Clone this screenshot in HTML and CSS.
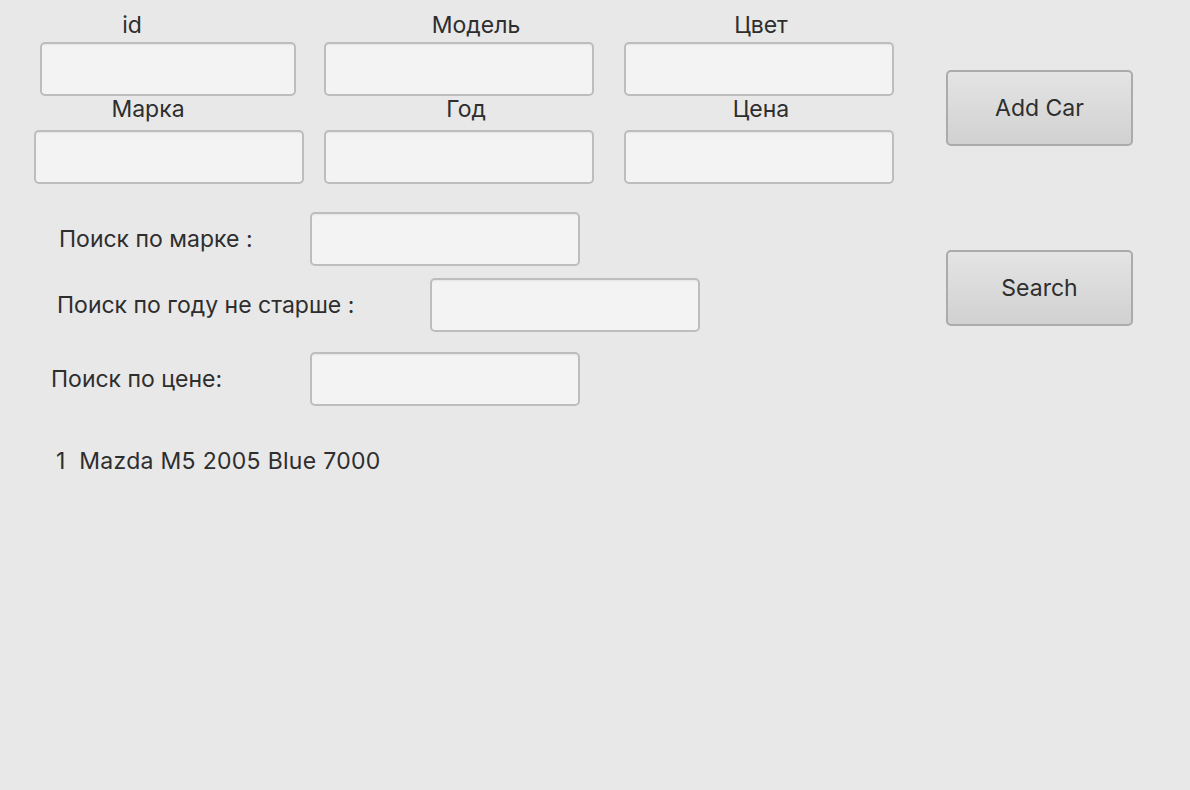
FILE: index.html
```html
<!DOCTYPE html>
<html lang="ru">
<head>
<meta charset="utf-8">
<title>Cars</title>
<link rel="stylesheet" href="styles.css">
</head>
<body>
<main class="page">
  <section class="form">
    <div class="lblrow r1">
      <div class="cell w256 ml40"><span class="lbl lbl-id">id</span></div>
      <div class="cell w270 ml28"><span class="lbl lbl-model">Модель</span></div>
      <div class="cell w270 ml30"><span class="lbl lbl-color">Цвет</span></div>
    </div>
    <div class="fieldrow">
      <input class="field w256 ml40" type="text">
      <input class="field w270 ml28" type="text">
      <input class="field w270 ml30" type="text">
    </div>
    <div class="lblrow r2">
      <div class="cell w270 ml34"><span class="lbl lbl-brand">Марка</span></div>
      <div class="cell w270 ml20"><span class="lbl lbl-year">Год</span></div>
      <div class="cell w270 ml30"><span class="lbl lbl-price">Цена</span></div>
    </div>
    <div class="fieldrow">
      <input class="field w270 ml34" type="text">
      <input class="field w270 ml20" type="text">
      <input class="field w270 ml30" type="text">
    </div>

    <div class="search s1">
      <span class="slabel sl1">Поиск по марке :</span>
      <input class="field w270" type="text">
    </div>
    <div class="search s2">
      <span class="slabel sl2">Поиск по году не старше :</span>
      <input class="field w270" type="text">
    </div>
    <div class="search s3">
      <span class="slabel sl3">Поиск по цене:</span>
      <input class="field w270" type="text">
    </div>

    <p class="result">1  Mazda M5 2005 Blue 7000</p>
  </section>

  <aside class="actions">
    <button class="btn btn-add" type="button">Add Car</button>
    <button class="btn btn-search" type="button">Search</button>
  </aside>
</main>
</body>
</html>
```

FILE: styles.css
```css
* { box-sizing: border-box; }

html, body {
  margin: 0;
  padding: 0;
  height: 100%;
  background: #e8e8e8;
}

body {
  font-family: "Inter", "Noto Sans", sans-serif;
  font-size: 23px;
  color: #2e2e2e;
}

.page {
  display: flex;
  width: 1190px;
  height: 790px;
}

.form {
  width: 900px;
  display: flex;
  flex-direction: column;
}

.lblrow {
  display: flex;
  line-height: 26px;
}
.lblrow.r1 { margin-top: 12px; height: 30px; }
.lblrow.r2 { height: 34px; }

.cell {
  display: block;
  text-align: center;
}
.lbl { display: inline-block; }
.lbl-id { margin-right: 72px; }
.lbl-model { margin-left: 34px; }
.lbl-color { margin-left: 4px; }
.lbl-brand { margin-right: 42px; }
.lbl-year { margin-left: 14px; }
.lbl-price { margin-left: 4px; }

.fieldrow { display: flex; }

.w256 { width: 256px; }
.w270 { width: 270px; }
.ml40 { margin-left: 40px; }
.ml34 { margin-left: 34px; }
.ml28 { margin-left: 28px; }
.ml30 { margin-left: 30px; }
.ml20 { margin-left: 20px; }

.field {
  height: 54px;
  border: 2px solid #bdbdbd;
  border-radius: 5px;
  background: #f3f3f3;
  box-shadow: inset 0 2px 2px -1px rgba(0, 0, 0, 0.06);
  font: inherit;
  outline: none;
  padding: 0 10px;
  flex: none;
}

.search {
  display: flex;
  align-items: center;
}
.s1 { margin-top: 28px; }
.s2 { margin-top: 12px; }
.s3 { margin-top: 20px; }

.slabel { flex: none; line-height: 26px; }
.sl1 { margin-left: 59px; width: 251px; }
.sl2 { margin-left: 57px; width: 373px; }
.sl3 { margin-left: 51px; width: 259px; }

.result {
  margin: 42px 0 0 56px;
  line-height: 26px;
  white-space: pre;
  letter-spacing: 0.3px;
}

.actions {
  display: flex;
  flex-direction: column;
  padding-left: 46px;
}

.btn {
  width: 187px;
  height: 76px;
  border: 2px solid #ababab;
  border-radius: 5px;
  background: linear-gradient(#e4e4e4, #d1d1d1);
  font: inherit;
  color: #2e2e2e;
  padding: 0;
  flex: none;
}
.btn-add { margin-top: 70px; }
.btn-search { margin-top: 104px; }
```
